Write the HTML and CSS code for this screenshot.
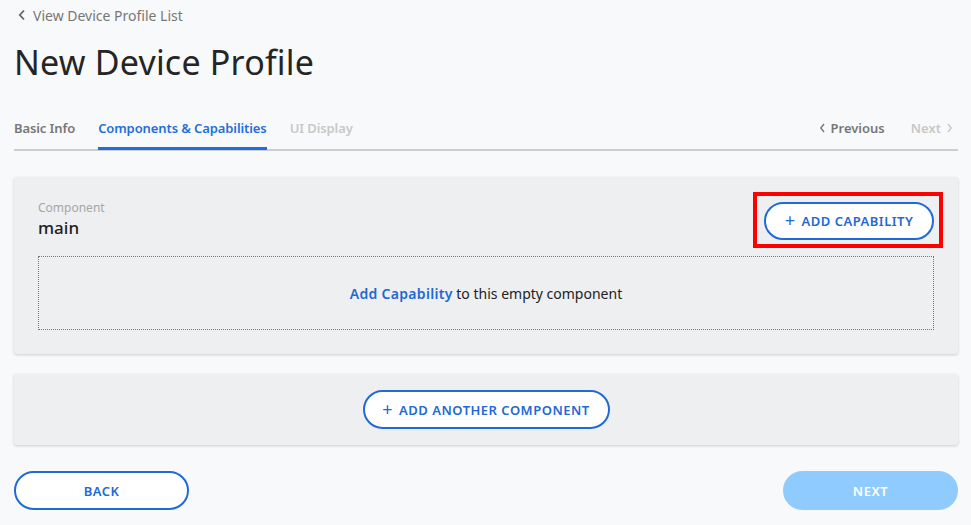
FILE: index.html
```html
<!DOCTYPE html>
<html>
<head>
<meta charset="utf-8">
<link rel="stylesheet" href="styles.css">
</head>
<body>
<div class="page">
  <a class="crumb"><svg class="chev" width="8" height="12" viewBox="0 0 8 12"><path d="M6 1.5 L1.8 6 L6 10.5" fill="none" stroke="#666" stroke-width="1.8"/></svg>View Device Profile List</a>
  <h1 class="title">New Device Profile</h1>
  <div class="tabs">
    <span class="tab">Basic Info</span>
    <span class="tab active">Components &amp; Capabilities</span>
    <span class="tab disabled">UI Display</span>
    <span class="spacer"></span>
    <span class="nav prev"><svg width="7" height="10" viewBox="0 0 7 10"><path d="M5 1 L1.8 5 L5 9" fill="none" stroke="#777" stroke-width="1.4"/></svg>Previous</span>
    <span class="nav next">Next<svg width="7" height="10" viewBox="0 0 7 10"><path d="M2 1 L5.2 5 L2 9" fill="none" stroke="#c8c8c8" stroke-width="1.4"/></svg></span>
  </div>
  <div class="card">
    <div class="card-head">
      <div>
        <div class="label">Component</div>
        <div class="name">main</div>
      </div>
      <div class="highlight-wrap">
        <button class="pill add-cap"><span class="plus">+</span>ADD CAPABILITY</button>
        <div class="highlight"></div>
      </div>
    </div>
    <div class="empty"><span class="link">Add Capability</span>&nbsp;to this empty component</div>
  </div>
  <div class="card card2">
    <button class="pill add-comp"><span class="plus">+</span>ADD ANOTHER COMPONENT</button>
  </div>
  <div class="footer">
    <button class="pill back">BACK</button>
    <button class="pill nextbtn">NEXT</button>
  </div>
</div>
</body>
</html>
```
FILE: styles.css
```css
* { box-sizing: border-box; }
html, body { margin: 0; padding: 0; }
body {
  background: #f8f9fa;
  font-family: "Noto Sans", "Open Sans", sans-serif;
  color: #222;
  width: 971px;
  height: 525px;
  overflow: hidden;
}
.page { padding: 0 13px 0 14px; }
.crumb {
  display: flex;
  align-items: center;
  gap: 7px;
  height: 30px;
  padding-left: 4px;
  font-size: 14px;
  color: #777;
}
.title {
  margin: 12px 0 0 0;
  font-weight: 400;
  font-size: 34px;
  line-height: 40px;
  color: #252525;
  letter-spacing: 0.2px;
}
.tabs {
  margin-top: 32px;
  display: flex;
  align-items: flex-start;
  border-bottom: 2px solid #cdcdcd;
  height: 37px;
}
.tab {
  font-size: 13px;
  font-weight: 600;
  color: #777;
  margin-right: 23px;
  height: 36px;
  padding-top: 5px;
  letter-spacing: -0.1px;
}
.tab.active {
  color: #1f6fdb;
  border-bottom: 3px solid #1f6fdb;
}
.tab.disabled { color: #c8c8c8; }
.spacer { flex: 1; }
.nav {
  font-size: 13px;
  font-weight: 600;
  padding-top: 5px;
  display: flex;
  align-items: center;
  gap: 5px;
}
.prev { color: #777; margin-right: 26px; }
.next { color: #c8c8c8; margin-right: 5px; }
.card {
  margin-top: 26px;
  background: #eeeff1;
  border-radius: 3px;
  box-shadow: 0 1px 3px rgba(0,0,0,0.18);
  padding: 23px 24px 24px 24px;
}
.card-head {
  display: flex;
  justify-content: space-between;
  align-items: flex-start;
}
.label {
  font-size: 12px;
  color: #a6a6a6;
  line-height: 16px;
}
.name {
  font-size: 17px;
  font-weight: 500;
  line-height: 22px;
  color: #222;
  margin-top: 1px;
}
.highlight-wrap {
  position: relative;
  margin-top: 2px;
}
.pill {
  font-family: "Noto Sans", "Open Sans", sans-serif;
  background: #fff;
  border: 2px solid #2169d4;
  color: #2169d4;
  border-radius: 20px;
  font-size: 13px;
  font-weight: 600;
  letter-spacing: 0.5px;
  display: flex;
  align-items: center;
  justify-content: center;
  cursor: pointer;
  padding: 0;
}
.plus {
  font-weight: 400;
  font-size: 18px;
  margin-right: 6px;
  line-height: 1;
  margin-top: -2px;
}
.add-cap { width: 170px; height: 38px; }
.highlight {
  position: absolute;
  left: -11px;
  top: -10px;
  width: 190px;
  height: 56px;
  border: 4px solid #ff0000;
}
.empty {
  margin-top: 16px;
  height: 74px;
  border: 1px dotted #777;
  display: flex;
  align-items: center;
  justify-content: center;
  font-size: 14px;
  color: #222;
}
.link { color: #2169d4; font-weight: 600; letter-spacing: 0.3px; }
.card2 {
  margin-top: 20px;
  padding: 16px 24px 16px 24px;
  display: flex;
  justify-content: center;
}
.add-comp { width: 247px; height: 39px; }
.footer {
  margin-top: 26px;
  display: flex;
  justify-content: space-between;
}
.back { width: 175px; height: 39px; }
.nextbtn {
  width: 175px;
  height: 39px;
  background: #90cbff;
  border-color: #90cbff;
  color: #fff;
}
```
